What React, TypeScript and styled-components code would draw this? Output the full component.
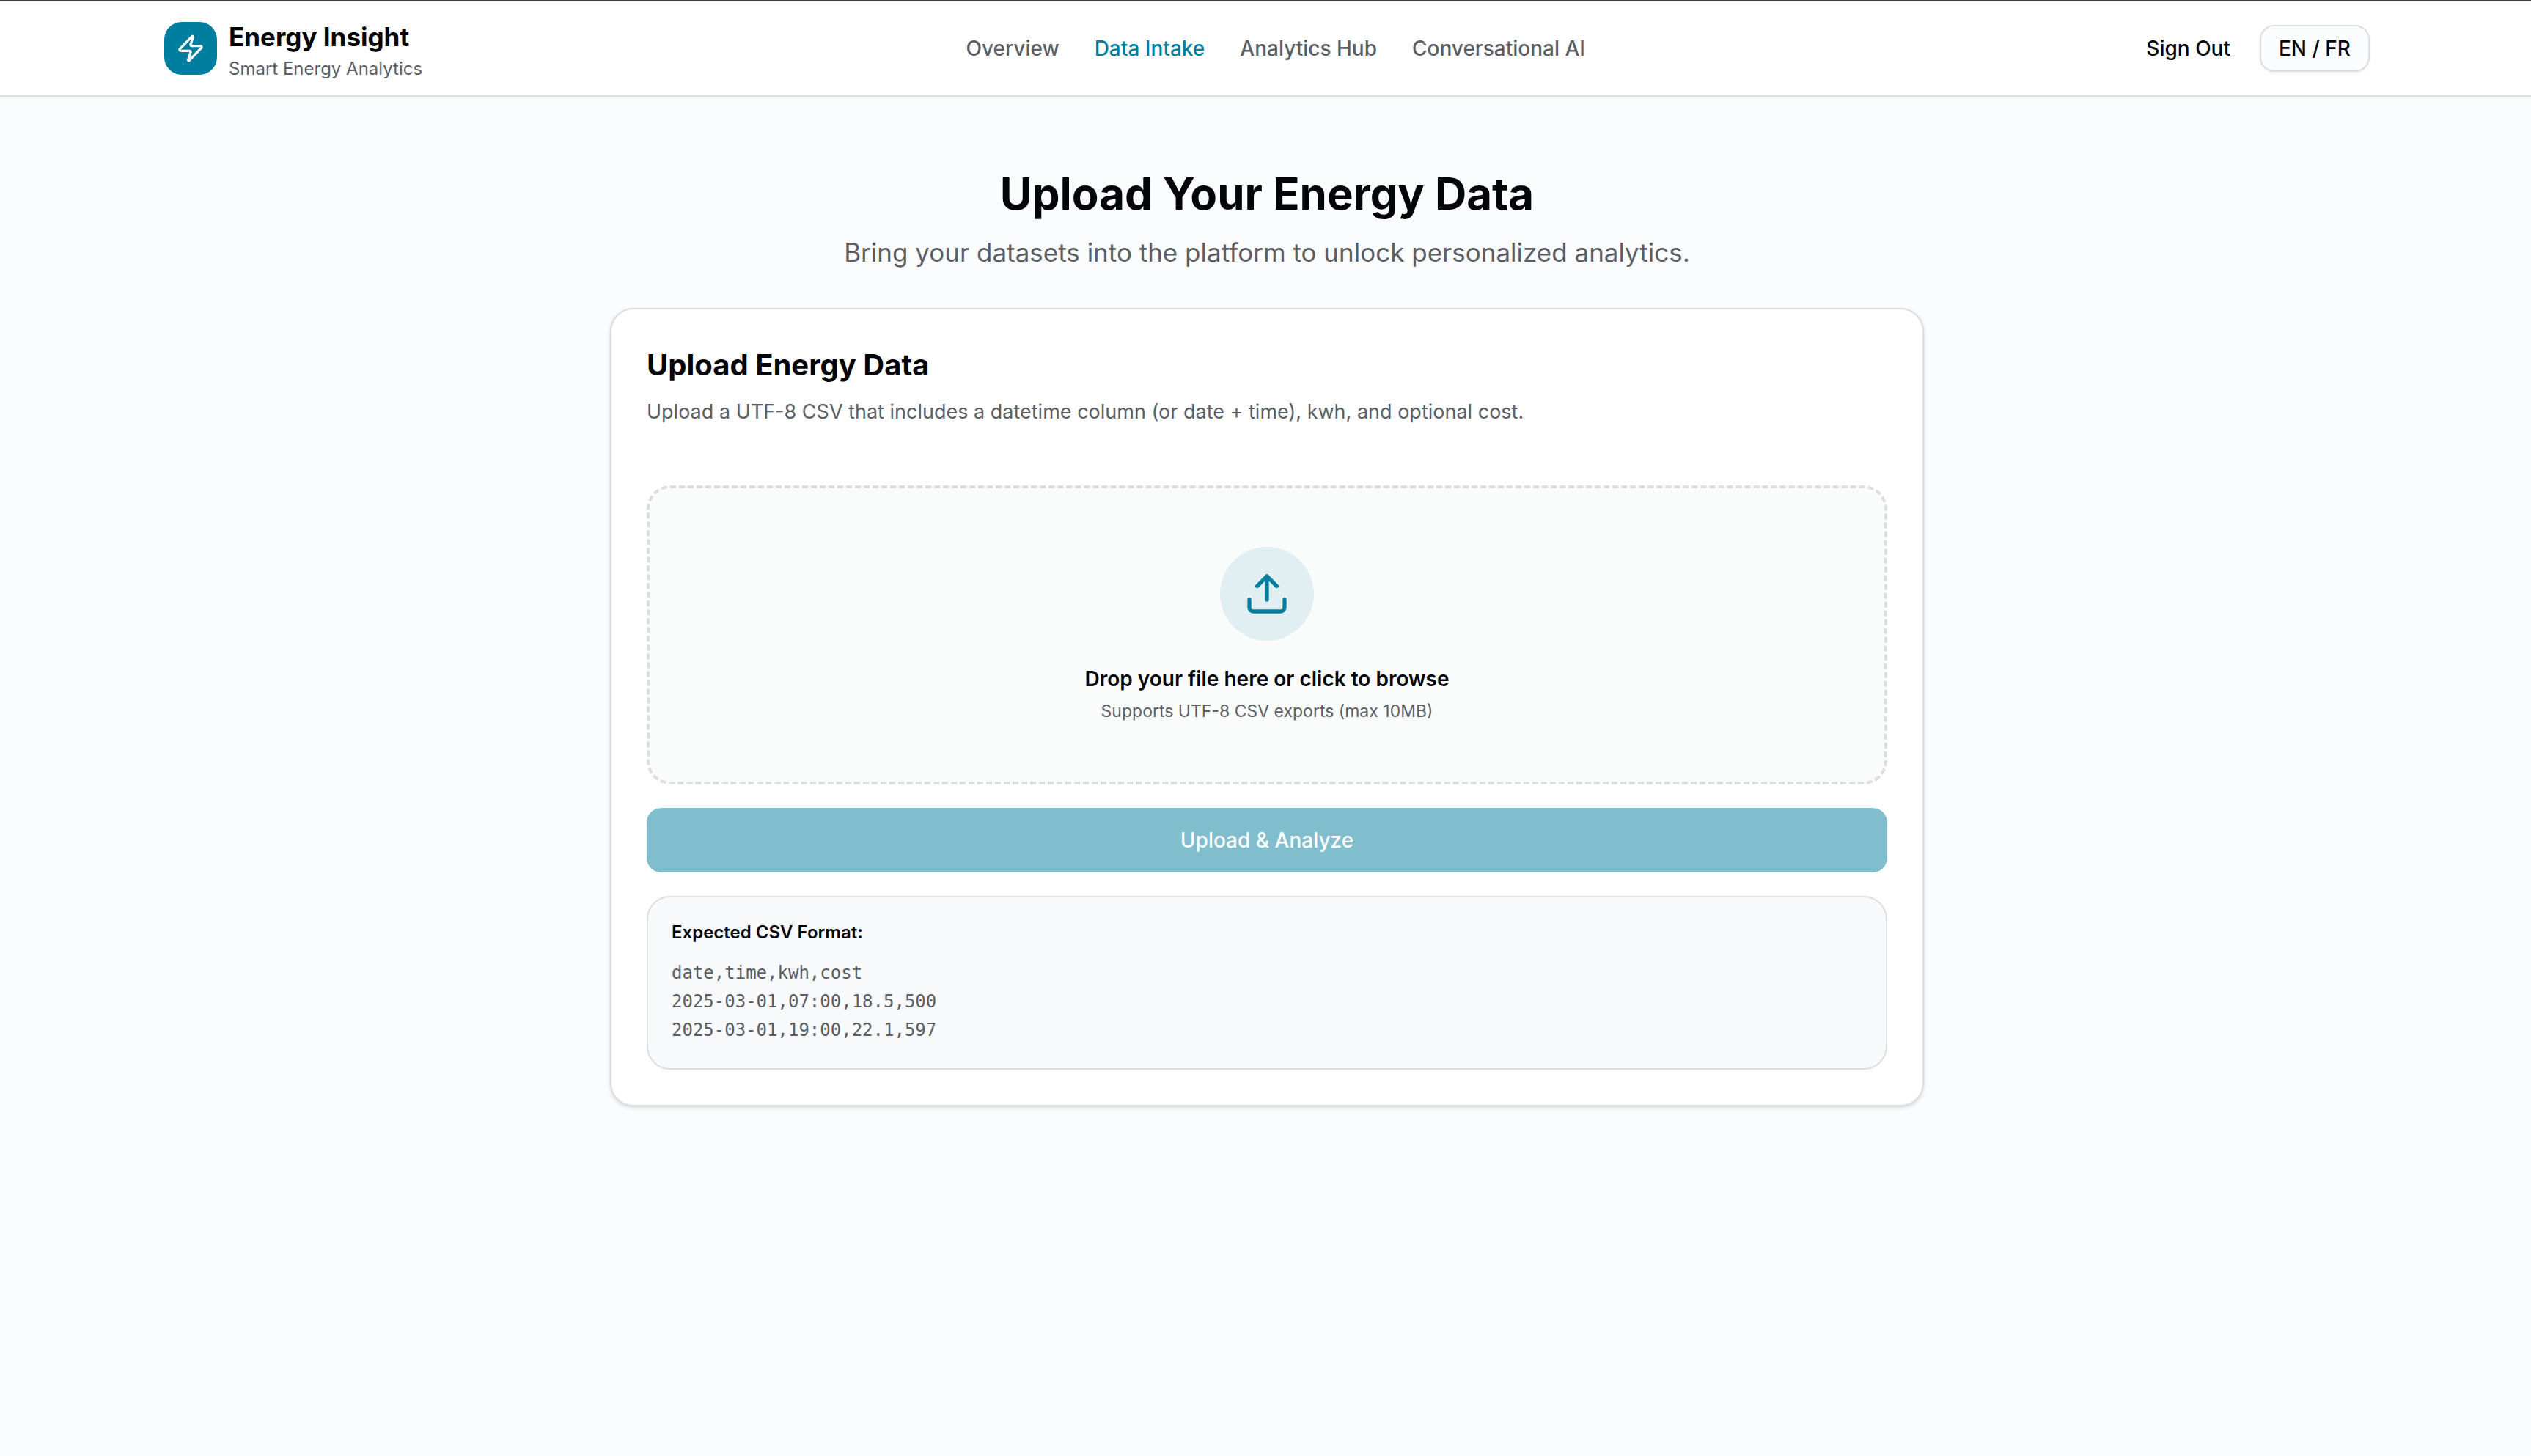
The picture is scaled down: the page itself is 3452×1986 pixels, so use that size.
import React from "react";
import styled, { createGlobalStyle } from "styled-components";
import { Upload, Zap } from "lucide-react";

const color = {
  ink: "#030508",
  muted: "#5b5f65",
  teal: "#007e9f",
  border: "#dcdee2",
  page: "#fbfcfe",
};

const GlobalStyle = createGlobalStyle`
  *, *::before, *::after { box-sizing: border-box; }
  body {
    margin: 0;
    background: ${color.page};
    color: ${color.ink};
    font-family: Inter, "Liberation Sans", sans-serif;
    -webkit-font-smoothing: antialiased;
  }
  h1, h2, h3, p, pre { margin: 0; }
  button { font-family: inherit; cursor: pointer; }
`;

const Page = styled.div`
  min-height: 100vh;
  border-top: 2px solid #444446;
`;

const Header = styled.header`
  display: flex;
  align-items: center;
  justify-content: space-between;
  height: 130px;
  padding: 0 220px 0 224px;
  background: #fff;
  border-bottom: 2px solid ${color.border};
`;

const Brand = styled.a`
  display: flex;
  align-items: center;
  gap: 16px;
  color: inherit;
  text-decoration: none;
`;

const BrandMark = styled.span`
  display: flex;
  align-items: center;
  justify-content: center;
  width: 72px;
  height: 72px;
  border-radius: 24px;
  background: ${color.teal};
  color: #fff;
`;

const BrandText = styled.span`
  display: flex;
  flex-direction: column;
`;

const BrandName = styled.span`
  font-size: 35px;
  line-height: 56px;
  font-weight: 700;
`;

const BrandTag = styled.span`
  font-size: 24px;
  line-height: 32px;
  color: ${color.muted};
`;

const Nav = styled.nav`
  display: flex;
  gap: 48px;
`;

const NavLink = styled.a<{ $active?: boolean }>`
  font-size: 28px;
  line-height: 40px;
  font-weight: 500;
  text-decoration: none;
  color: ${(p) => (p.$active ? color.teal : color.muted)};
`;

const Actions = styled.div`
  display: flex;
  align-items: center;
  gap: 16px;
`;

const HeaderButton = styled.button<{ $outlined?: boolean }>`
  height: 64px;
  padding: 0 24px;
  font-size: 28px;
  line-height: 40px;
  font-weight: 500;
  color: ${color.ink};
  border-radius: 20px;
  border: ${(p) => (p.$outlined ? `2px solid ${color.border}` : "0")};
  background: ${(p) => (p.$outlined ? color.page : "transparent")};
  box-shadow: ${(p) => (p.$outlined ? "0 2px 4px rgba(0, 0, 0, 0.05)" : "none")};
`;

const Main = styled.main`
  display: flex;
  flex-direction: column;
  align-items: center;
  padding: 96px 0 96px 4px;
`;

const PageTitle = styled.h1`
  font-size: 60px;
  line-height: 72px;
  font-weight: 700;
`;

const PageLead = styled.p`
  margin-top: 16px;
  font-size: 35px;
  line-height: 56px;
  color: ${color.muted};
`;

const Card = styled.section`
  display: flex;
  flex-direction: column;
  width: 100%;
  max-width: 1792px;
  margin-top: 48px;
  padding: 48px;
  background: #fff;
  border: 2px solid ${color.border};
  border-radius: 32px;
  box-shadow: 0 2px 6px rgba(0, 0, 0, 0.1), 0 2px 4px rgba(0, 0, 0, 0.06);
`;

const CardTitle = styled.h2`
  font-size: 40px;
  line-height: 56px;
  font-weight: 700;
`;

const CardText = styled.p`
  margin-top: 16px;
  font-size: 27px;
  line-height: 40px;
  color: ${color.muted};
`;

const DropZone = styled.label`
  display: flex;
  flex-direction: column;
  align-items: center;
  margin-top: 80px;
  padding: 80px 48px;
  border: 4px dashed ${color.border};
  border-radius: 32px;
  background: #fafcfc;
  cursor: pointer;
`;

const FileInput = styled.input`
  position: absolute;
  width: 1px;
  height: 1px;
  opacity: 0;
`;

const IconCircle = styled.span`
  display: flex;
  align-items: center;
  justify-content: center;
  width: 128px;
  height: 128px;
  border-radius: 50%;
  background: #e1eef2;
  color: ${color.teal};
`;

const DropTitle = styled.span`
  margin-top: 32px;
  font-size: 28px;
  line-height: 40px;
  font-weight: 600;
`;

const DropHint = styled.span`
  margin-top: 8px;
  font-size: 23px;
  line-height: 32px;
  color: ${color.muted};
`;

const SubmitButton = styled.button`
  height: 88px;
  margin-top: 32px;
  border: 0;
  border-radius: 20px;
  background: #80bdcd;
  color: #fff;
  font-size: 28px;
  line-height: 40px;
  font-weight: 500;
`;

const FormatBox = styled.section`
  margin-top: 32px;
  padding: 32px;
  border: 2px solid ${color.border};
  border-radius: 32px;
  background: #f8f9fb;
`;

const FormatTitle = styled.h3`
  font-size: 24px;
  line-height: 32px;
  font-weight: 600;
`;

const FormatSample = styled.pre`
  margin-top: 20px;
  font-family: "DejaVu Sans Mono", "Liberation Mono", monospace;
  font-size: 24px;
  line-height: 39px;
  color: ${color.muted};
`;

const links = ["Overview", "Data Intake", "Analytics Hub", "Conversational AI"];

const sample = `date,time,kwh,cost
2025-03-01,07:00,18.5,500
2025-03-01,19:00,22.1,597`;

export default function App() {
  return (
    <Page>
      <GlobalStyle />
      <Header>
        <Brand href="#">
          <BrandMark>
            <Zap size={40} />
          </BrandMark>
          <BrandText>
            <BrandName>Energy Insight</BrandName>
            <BrandTag>Smart Energy Analytics</BrandTag>
          </BrandText>
        </Brand>
        <Nav>
          {links.map((label) => (
            <NavLink key={label} href="#" $active={label === "Data Intake"}>
              {label}
            </NavLink>
          ))}
        </Nav>
        <Actions>
          <HeaderButton type="button">Sign Out</HeaderButton>
          <HeaderButton type="button" $outlined>
            EN / FR
          </HeaderButton>
        </Actions>
      </Header>
      <Main>
        <PageTitle>Upload Your Energy Data</PageTitle>
        <PageLead>Bring your datasets into the platform to unlock personalized analytics.</PageLead>
        <Card>
          <CardTitle>Upload Energy Data</CardTitle>
          <CardText>
            Upload a UTF-8 CSV that includes a datetime column (or date + time), kwh, and optional cost.
          </CardText>
          <DropZone htmlFor="energy-file">
            <FileInput id="energy-file" type="file" accept=".csv" />
            <IconCircle>
              <Upload size={64} />
            </IconCircle>
            <DropTitle>Drop your file here or click to browse</DropTitle>
            <DropHint>Supports UTF-8 CSV exports (max 10MB)</DropHint>
          </DropZone>
          <SubmitButton type="button">Upload &amp; Analyze</SubmitButton>
          <FormatBox>
            <FormatTitle>Expected CSV Format:</FormatTitle>
            <FormatSample>{sample}</FormatSample>
          </FormatBox>
        </Card>
      </Main>
    </Page>
  );
}
